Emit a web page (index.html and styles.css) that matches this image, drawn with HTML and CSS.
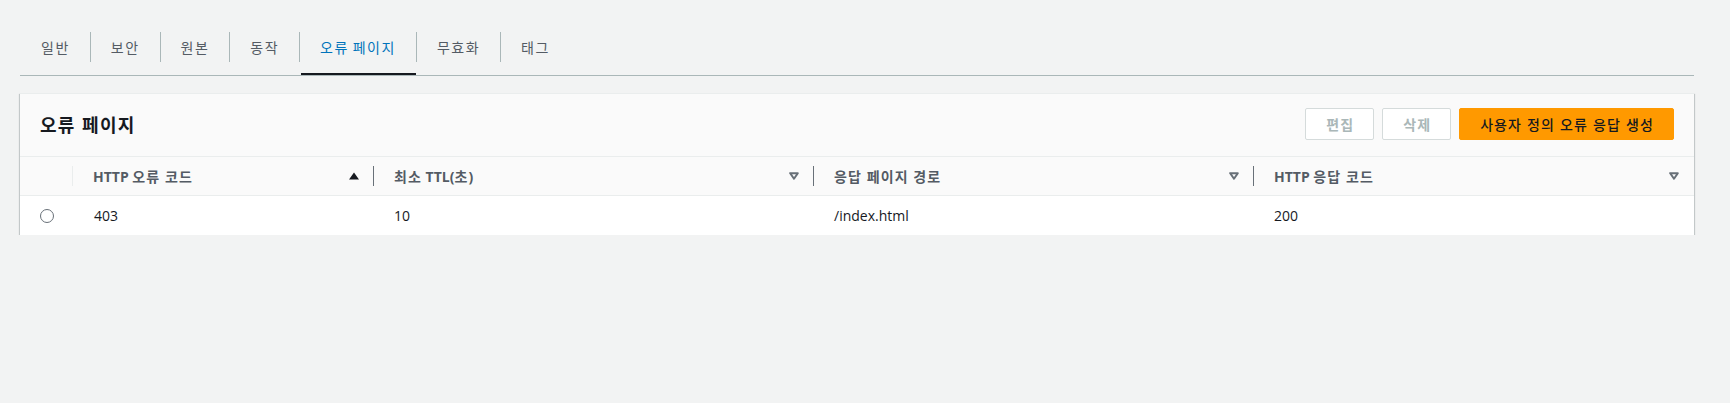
FILE: index.html
```html
<!DOCTYPE html>
<html lang="ko">
<head>
<meta charset="utf-8">
<title>오류 페이지</title>
<link rel="stylesheet" href="styles.css">
</head>
<body>
<div class="page">
  <nav class="tabs">
    <div class="tab"><span class="tab-label">일반</span></div>
    <div class="tab"><span class="tab-label">보안</span></div>
    <div class="tab"><span class="tab-label">원본</span></div>
    <div class="tab"><span class="tab-label">동작</span></div>
    <div class="tab tab-active"><span class="tab-label">오류 페이지</span></div>
    <div class="tab"><span class="tab-label">무효화</span></div>
    <div class="tab"><span class="tab-label">태그</span></div>
  </nav>

  <section class="card">
    <header class="card-header">
      <h2 class="card-title">오류 페이지</h2>
      <div class="actions">
        <button class="btn btn-disabled">편집</button>
        <button class="btn btn-disabled">삭제</button>
        <button class="btn btn-primary">사용자 정의 오류 응답 생성</button>
      </div>
    </header>

    <div class="row head-row">
      <div class="cell sel-cell"><span class="divider divider-light"></span></div>
      <div class="cell hcell">
        <span class="label">HTTP <span class="ko">오류 코드</span></span>
        <svg class="sort" width="10" height="8" viewBox="0 0 10 8"><path d="M0 7.5 L5 0.5 L10 7.5 Z" fill="#16191f"/></svg>
      </div>
      <div class="cell hcell">
        <span class="divider"></span>
        <span class="label"><span class="ko">최소</span> TTL(<span class="ko">초</span>)</span>
        <svg class="sort" width="10" height="8" viewBox="0 0 10 8"><path d="M1.2 1.2 H8.8 L5 6.8 Z" fill="none" stroke="#687078" stroke-width="2" stroke-linejoin="round"/></svg>
      </div>
      <div class="cell hcell">
        <span class="divider"></span>
        <span class="label"><span class="ko">응답 페이지 경로</span></span>
        <svg class="sort" width="10" height="8" viewBox="0 0 10 8"><path d="M1.2 1.2 H8.8 L5 6.8 Z" fill="none" stroke="#687078" stroke-width="2" stroke-linejoin="round"/></svg>
      </div>
      <div class="cell hcell hcell-last">
        <span class="divider"></span>
        <span class="label">HTTP <span class="ko">응답 코드</span></span>
        <svg class="sort" width="10" height="8" viewBox="0 0 10 8"><path d="M1.2 1.2 H8.8 L5 6.8 Z" fill="none" stroke="#687078" stroke-width="2" stroke-linejoin="round"/></svg>
      </div>
    </div>

    <div class="row data-row">
      <div class="cell sel-cell"><span class="radio"></span></div>
      <div class="cell dcell">403</div>
      <div class="cell dcell">10</div>
      <div class="cell dcell">/index.html</div>
      <div class="cell dcell">200</div>
    </div>
  </section>
</div>
</body>
</html>
```

FILE: styles.css
```css
* {
  box-sizing: border-box;
}

html, body {
  margin: 0;
  padding: 0;
  background: #f2f3f3;
}

body {
  font-family: "Open Sans", "Noto Sans CJK KR", sans-serif;
  font-size: 14px;
  color: #16191f;
}

.page {
  padding: 24px 36px 0 20px;
}

.ko {
  letter-spacing: 1.1px;
}

/* Tabs */
.tabs {
  display: flex;
  border-bottom: 1px solid #aab7b8;
}

.tab {
  position: relative;
  padding: 8px 0 13px;
  color: #545b64;
  font-family: "Noto Sans CJK KR", sans-serif;
  font-size: 14px;
  letter-spacing: 1.5px;
  word-spacing: -1.5px;
}

.tab-label {
  display: block;
  height: 30px;
  line-height: 30px;
  padding: 0 20px;
  border-left: 1px solid #aab7b8;
}

.tab:first-child .tab-label {
  border-left-color: transparent;
}

.tab-active {
  color: #0073bb;
}

.tab-active::after {
  content: "";
  position: absolute;
  left: 2px;
  right: 0;
  bottom: 0;
  height: 2px;
  background: #16191f;
}

/* Card */
.card {
  margin-top: 17px;
  background: #ffffff;
  border-top: 1px solid #eaeded;
  box-shadow: 0 1px 1px 0 rgba(0, 28, 36, 0.3),
              1px 1px 1px 0 rgba(0, 28, 36, 0.15),
              -1px 1px 1px 0 rgba(0, 28, 36, 0.15);
}

.card-header {
  display: flex;
  align-items: center;
  justify-content: space-between;
  padding: 14px 20px 16px;
  background: #fafafa;
  border-bottom: 1px solid #eaeded;
}

.card-title {
  margin: 0;
  font-family: "Noto Sans CJK KR", sans-serif;
  font-size: 18px;
  font-weight: 700;
  line-height: 22px;
  letter-spacing: 1.3px;
  color: #16191f;
}

.actions {
  display: flex;
  gap: 8px;
}

.btn {
  height: 32px;
  padding: 0 19px 0 20px;
  border-radius: 2px;
  font-family: "Noto Sans CJK KR", sans-serif;
  font-size: 14px;
  font-weight: 700;
  line-height: 30px;
  letter-spacing: 1.1px;
  cursor: pointer;
}

.btn-disabled {
  background: #ffffff;
  border: 1px solid #d5dbdb;
  color: #aab7b8;
}

.btn-primary {
  background: #ff9900;
  border: 1px solid #ff9900;
  color: #16191f;
  font-weight: 500;
}

/* Table rows */
.row {
  display: grid;
  grid-template-columns: 53px 300px 440px 440px 1fr;
}

.head-row {
  height: 39px;
  background: #fafafa;
  border-bottom: 1px solid #eaeded;
}

.cell {
  display: flex;
  align-items: center;
}

.hcell {
  padding-right: 14px;
  font-weight: 700;
  color: #545b64;
}

.hcell-last {
  padding-right: 15px;
}

.sel-cell {
  justify-content: flex-end;
}

.divider {
  flex: none;
  width: 1px;
  height: 20px;
  background: #687078;
}

.divider-light {
  background: #eaeded;
}

.label {
  flex: 1;
  padding-left: 20px;
  white-space: nowrap;
}

.hcell:first-of-type .label {
  padding-left: 21px;
}

.sort {
  flex: none;
  display: block;
}

.data-row {
  height: 39px;
  background: #ffffff;
}

.data-row .sel-cell {
  justify-content: flex-start;
  padding-left: 20px;
}

.dcell {
  padding-left: 21px;
  color: #16191f;
}

.radio {
  display: block;
  width: 14px;
  height: 14px;
  border: 1.5px solid #687078;
  border-radius: 50%;
  background: #ffffff;
}
```
